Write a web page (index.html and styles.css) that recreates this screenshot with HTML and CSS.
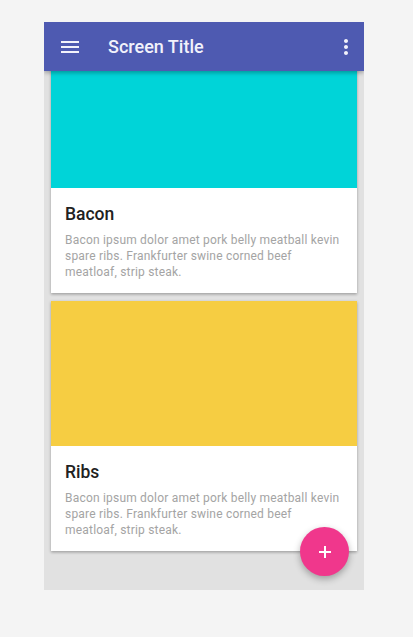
FILE: index.html
```html
<!DOCTYPE html>
<html lang="en">
<head>
<meta charset="utf-8">
<title>Screen Title</title>
<link rel="stylesheet" href="styles.css">
</head>
<body>
<div class="phone">
  <header class="appbar">
    <button class="icon-btn menu" aria-label="Menu">
      <svg width="24" height="24" viewBox="0 0 24 24"><path fill="currentColor" d="M3 18h18v-2H3v2zm0-5h18v-2H3v2zm0-7v2h18V6H3z"/></svg>
    </button>
    <h1 class="title">Screen Title</h1>
    <button class="icon-btn more" aria-label="More">
      <svg width="24" height="24" viewBox="0 0 24 24"><path fill="currentColor" d="M12 8c1.1 0 2-.9 2-2s-.9-2-2-2-2 .9-2 2 .9 2 2 2zm0 2c-1.1 0-2 .9-2 2s.9 2 2 2 2-.9 2-2-.9-2-2-2zm0 6c-1.1 0-2 .9-2 2s.9 2 2 2 2-.9 2-2-.9-2-2-2z"/></svg>
    </button>
  </header>
  <main class="content">
    <div class="list">
      <article class="card">
        <div class="media media-teal"></div>
        <div class="card-body">
          <h2 class="card-title">Bacon</h2>
          <p class="card-text">Bacon ipsum dolor amet pork belly meatball kevin spare ribs. Frankfurter swine corned beef meatloaf, strip steak.</p>
        </div>
      </article>
      <article class="card">
        <div class="media media-yellow"></div>
        <div class="card-body">
          <h2 class="card-title">Ribs</h2>
          <p class="card-text">Bacon ipsum dolor amet pork belly meatball kevin spare ribs. Frankfurter swine corned beef meatloaf, strip steak.</p>
        </div>
      </article>
    </div>
  </main>
  <button class="fab" aria-label="Add">
    <svg width="12" height="12" viewBox="0 0 12 12"><path d="M6 0v12M0 6h12" stroke="currentColor" stroke-width="2"/></svg>
  </button>
</div>
</body>
</html>
```

FILE: styles.css
```css
* { box-sizing: border-box; }

html, body {
  margin: 0;
  background: #f4f4f4;
}

body {
  padding: 22px 0 0 44px;
  font-family: Roboto, "Liberation Sans", sans-serif;
}

.phone {
  position: relative;
  width: 320px;
  height: 568px;
  display: flex;
  flex-direction: column;
  overflow: hidden;
  background: #e1e1e1;
}

.appbar {
  position: relative;
  z-index: 2;
  height: 49px;
  flex: none;
  display: flex;
  align-items: center;
  padding: 0 6px 0 14px;
  background: #4e5ab1;
  color: #f2f2fb;
  box-shadow: 0 2px 4px rgba(0, 0, 0, 0.28);
}

.icon-btn {
  border: 0;
  padding: 0;
  margin: 0;
  background: none;
  color: inherit;
  width: 24px;
  height: 24px;
  display: flex;
}

.title {
  flex: 1;
  margin: 0 0 0 26px;
  font-size: 18px;
  font-weight: 500;
  line-height: 24px;
}

.content {
  flex: 1;
  overflow: hidden;
  padding: 0 7px;
  background: #e1e1e1;
}

.list {
  margin-top: -28px;
  display: flex;
  flex-direction: column;
  gap: 8px;
}

.card {
  background: #fff;
  box-shadow: 0 1px 3px rgba(0, 0, 0, 0.25), 0 2px 2px rgba(0, 0, 0, 0.08);
}

.media {
  height: 145px;
}

.media-teal { background: #00d4d8; }
.media-yellow { background: #f6cd42; }

.card-body {
  padding: 16px 14px 13px 14px;
}

.card-title {
  margin: 0;
  font-size: 17.5px;
  font-weight: 500;
  line-height: 20px;
  color: #212121;
}

.card-text {
  margin: 8px 0 0;
  font-size: 12px;
  line-height: 16px;
  letter-spacing: 0.2px;
  color: #a4a4a4;
}

.fab {
  position: absolute;
  right: 15px;
  bottom: 14px;
  width: 49px;
  height: 49px;
  border: 0;
  padding: 0;
  border-radius: 50%;
  background: #f0378c;
  color: #fff;
  display: flex;
  align-items: center;
  justify-content: center;
  box-shadow: 0 3px 7px rgba(0, 0, 0, 0.3);
}
```
